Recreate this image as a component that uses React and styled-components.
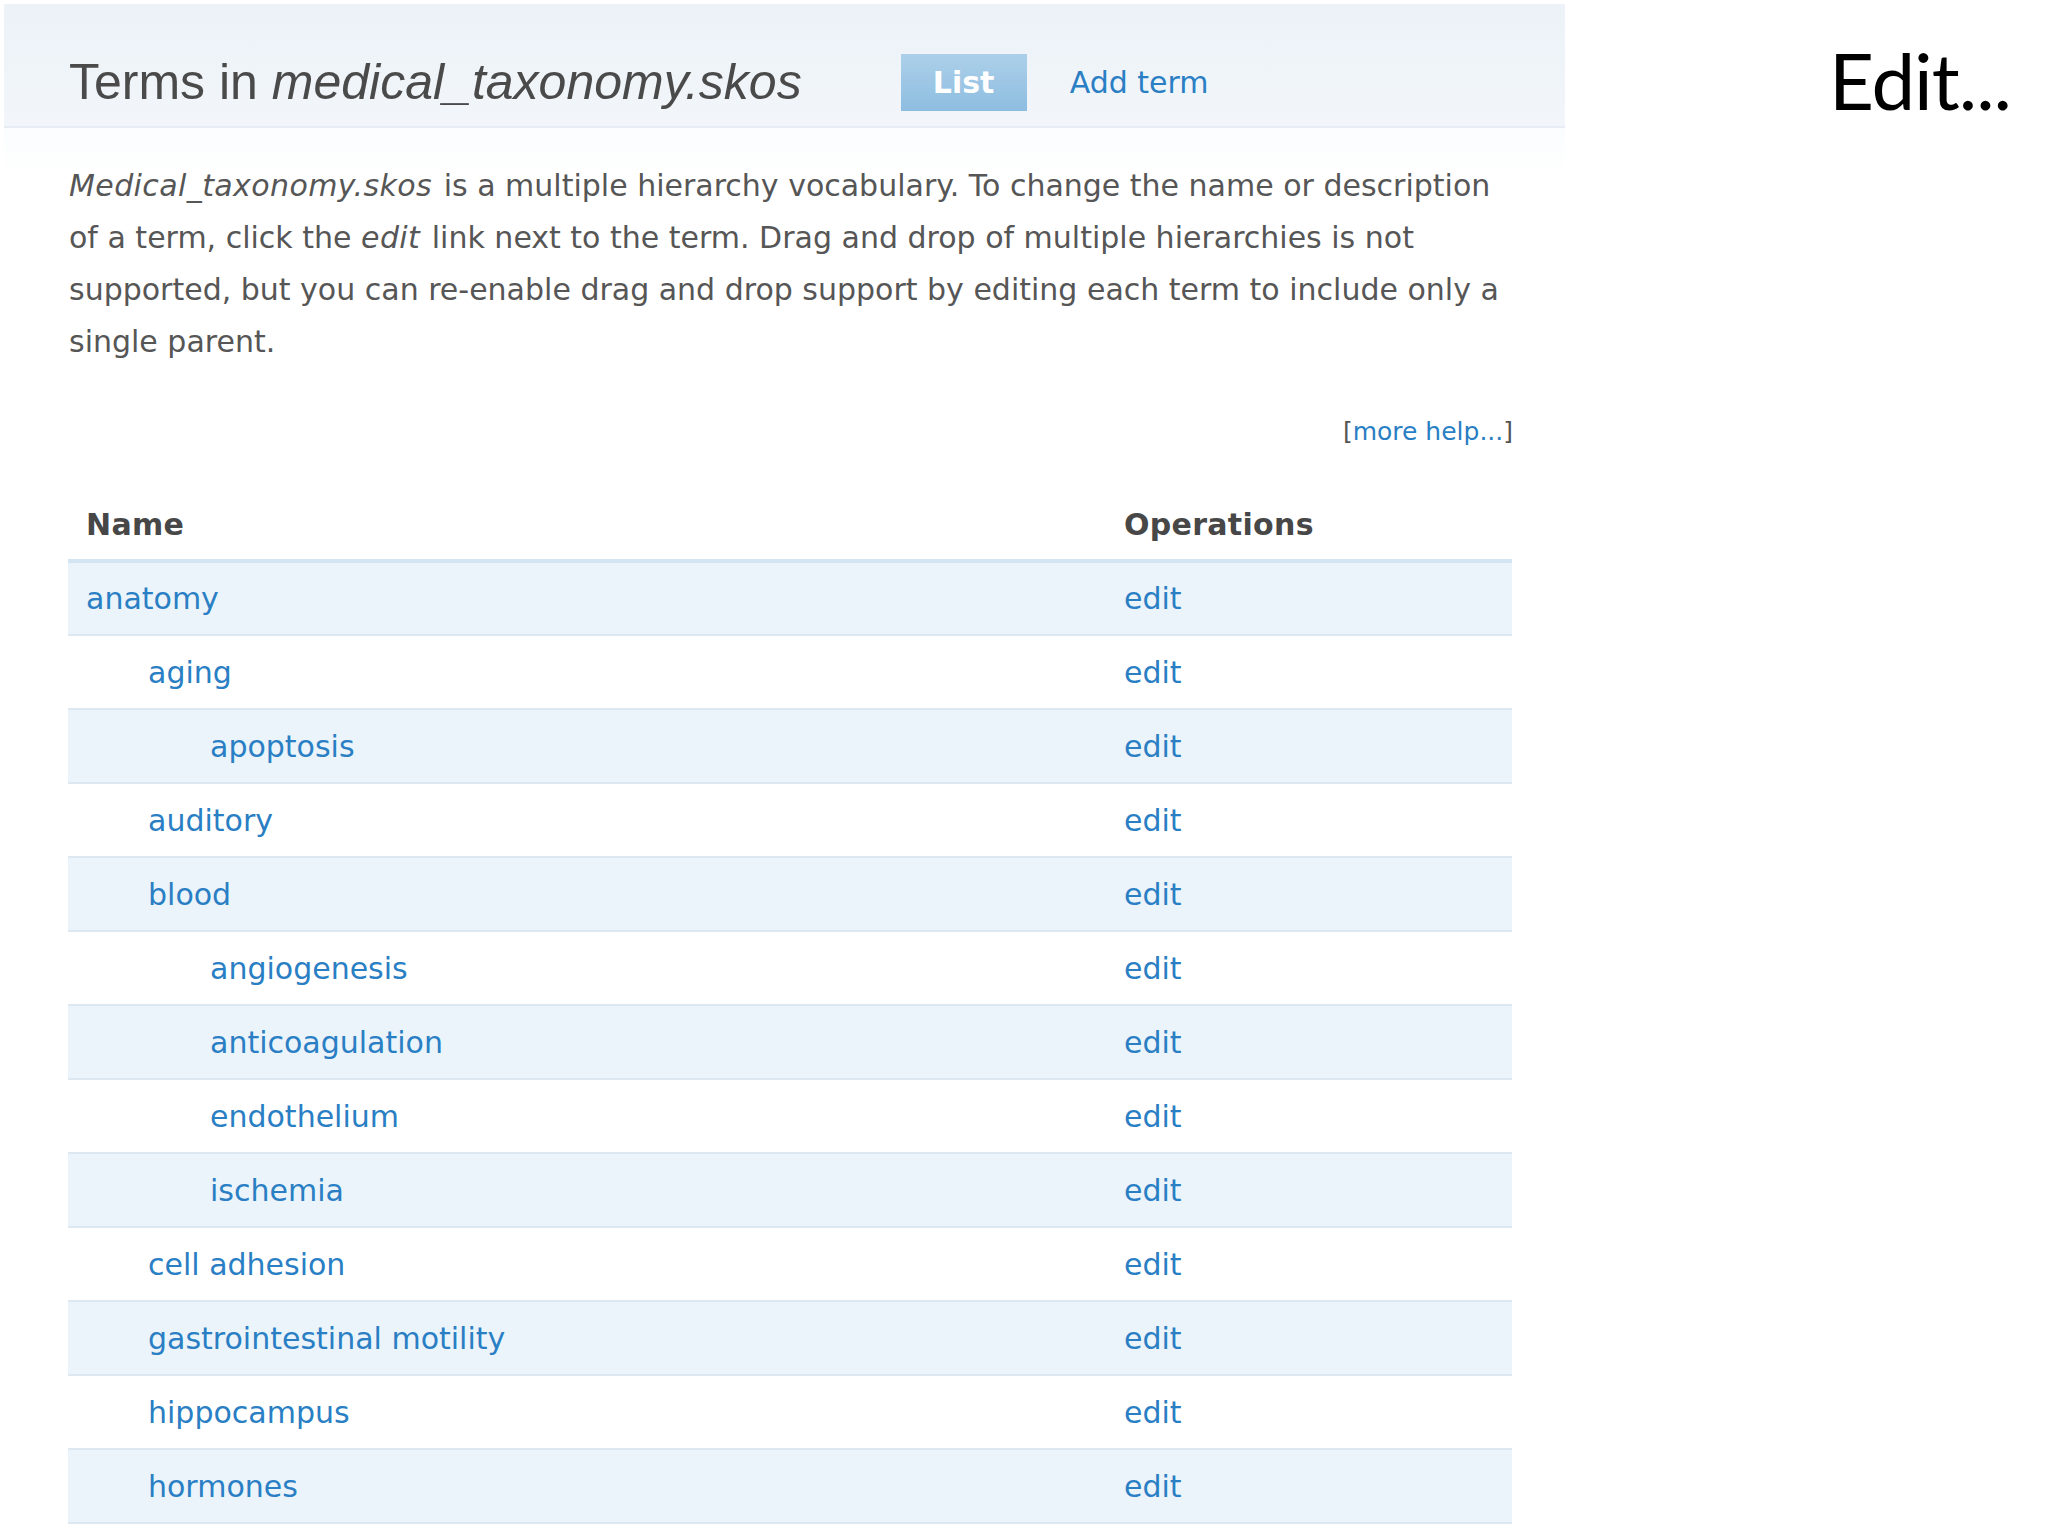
import React from "react";
import styled, { createGlobalStyle } from "styled-components";

const GlobalStyle = createGlobalStyle`
  html, body { margin: 0; padding: 0; background: #ffffff; }
  body { font-family: "DejaVu Sans", "Liberation Sans", sans-serif; }
`;

const Page = styled.div`
  display: flex;
  align-items: flex-start;
  width: 2048px;
  height: 1536px;
  padding: 4px 0 0 4px;
  box-sizing: border-box;
  overflow: hidden;
`;

const Panel = styled.div`
  width: 1561px;
  flex: none;
  display: flex;
  flex-direction: column;
  background: linear-gradient(#f3f7fb 0px, #ffffff 180px);
`;

const HeaderBand = styled.div`
  height: 124px;
  box-sizing: border-box;
  display: flex;
  align-items: center;
  padding: 34px 0 0 65px;
  background: linear-gradient(#ecf2f8, #f2f6fa);
  border-bottom: 2px solid #e6edf4;
`;

const Title = styled.h1`
  margin: 0;
  font-family: "Liberation Sans", Arial, sans-serif;
  font-weight: normal;
  font-size: 50px;
  color: #4a4a4a;
  em { font-style: italic; }
`;

const Tabs = styled.div`
  display: flex;
  align-items: center;
  margin-left: 99px;
  gap: 43px;
`;

const Tab = styled.a`
  font-family: "DejaVu Sans", sans-serif;
  font-size: 30px;
  text-decoration: none;
  box-sizing: border-box;
  height: 57px;
  display: flex;
  align-items: center;
  justify-content: center;
  color: ${(p) => (p.$active ? "#ffffff" : "#2a7fc4")};
  font-weight: ${(p) => (p.$active ? "bold" : "normal")};
  width: ${(p) => (p.$active ? "126px" : "auto")};
  background: ${(p) => (p.$active ? "linear-gradient(#acd0ea, #8ebde0)" : "transparent")};
`;

const Body = styled.div`
  padding: 32px 0 0 65px;
  width: 1444px;
`;

const Intro = styled.p`
  margin: 0;
  font-size: 30px;
  line-height: 52px;
  color: #565656;
  width: 1446px;
  em { font-style: italic; letter-spacing: 0.4px; margin-right: 2px; }
`;

const HelpRow = styled.div`
  margin-top: 44px;
  text-align: right;
  font-size: 25px;
  line-height: 40px;
  color: #555;
`;

const Link = styled.a`
  color: #2a7fc4;
  text-decoration: none;
`;

const Table = styled.table`
  margin: 37px 0 0 -1px;
  width: 1444px;
  border-collapse: collapse;
  font-size: 30px;
`;

const Th = styled.th`
  text-align: left;
  font-weight: bold;
  color: #474747;
  height: 70px;
  padding: 0 0 0 18px;
  letter-spacing: 0.3px;
  border-bottom: 4px solid #d3e4f2;
  width: ${(p) => p.$w || "auto"};
`;

const Tr = styled.tr`
  background: ${(p) => (p.$odd ? "#ebf4fa" : "#ffffff")};
  border-bottom: 2px solid #dbe8f2;
`;

const Td = styled.td`
  height: 74px;
  padding: 0 0 0 18px;
  box-sizing: border-box;
`;

const Indent = styled.span`
  display: inline-block;
  padding-left: ${(p) => p.$level * 62}px;
`;

const Aside = styled.div`
  flex: 1;
  display: flex;
  justify-content: flex-end;
  padding: 37px 37px 0 0;
`;

const SlideTitle = styled.div`
  font-family: Lato, "Open Sans", sans-serif;
  font-size: 78px;
  line-height: 1;
  color: #000;
  letter-spacing: -1px;
`;

const terms = [
  ["anatomy", 0],
  ["aging", 1],
  ["apoptosis", 2],
  ["auditory", 1],
  ["blood", 1],
  ["angiogenesis", 2],
  ["anticoagulation", 2],
  ["endothelium", 2],
  ["ischemia", 2],
  ["cell adhesion", 1],
  ["gastrointestinal motility", 1],
  ["hippocampus", 1],
  ["hormones", 1],
];

export default function App() {
  return (
    <>
      <GlobalStyle />
      <Page>
        <Panel>
          <HeaderBand>
            <Title>
              Terms in <em>medical_taxonomy.skos</em>
            </Title>
            <Tabs>
              <Tab $active href="#">List</Tab>
              <Tab href="#">Add term</Tab>
            </Tabs>
          </HeaderBand>
          <Body>
            <Intro>
              <em>Medical_taxonomy.skos</em> is a multiple hierarchy vocabulary. To change the name or description of a term, click the <em>edit</em> link next to the term. Drag and drop of multiple hierarchies is not supported, but you can re-enable drag and drop support by editing each term to include only a single parent.
            </Intro>
            <HelpRow>
              [<Link href="#">more help...</Link>]
            </HelpRow>
            <Table>
              <thead>
                <tr>
                  <Th $w="1020px">Name</Th>
                  <Th>Operations</Th>
                </tr>
              </thead>
              <tbody>
                {terms.map(([name, level], i) => (
                  <Tr key={name} $odd={i % 2 === 0}>
                    <Td>
                      <Indent $level={level}>
                        <Link href="#">{name}</Link>
                      </Indent>
                    </Td>
                    <Td>
                      <Link href="#">edit</Link>
                    </Td>
                  </Tr>
                ))}
              </tbody>
            </Table>
          </Body>
        </Panel>
        <Aside>
          <SlideTitle>Edit...</SlideTitle>
        </Aside>
      </Page>
    </>
  );
}
